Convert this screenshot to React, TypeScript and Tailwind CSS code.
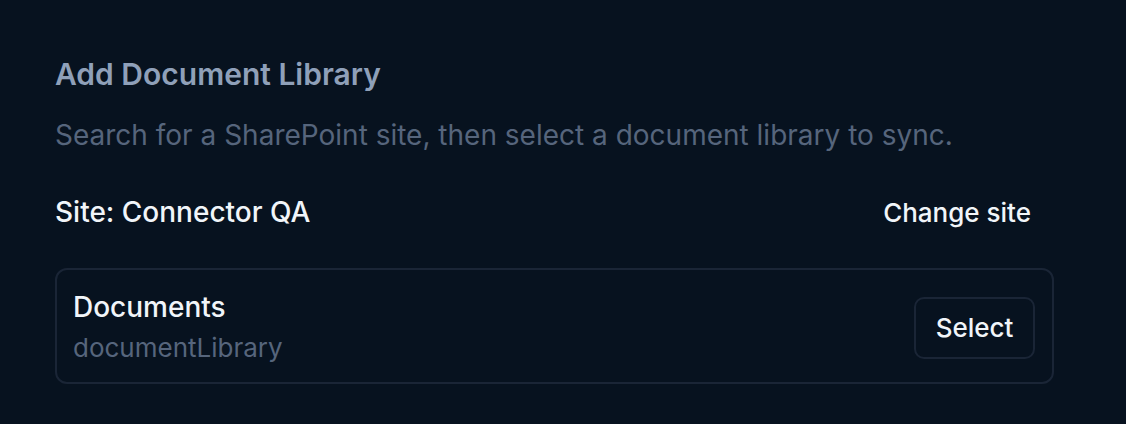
export default function App() {
  return (
    <div
      className="min-h-screen w-full bg-[#07121f] text-white"
      style={{ fontFamily: "Inter, 'Noto Sans', sans-serif" }}
    >
      <div className="pl-[55px] pr-[72px] pt-[54px]">
        <h2 className="text-[30px] leading-[40px] font-semibold text-[#8fa0b9]">
          Add Document Library
        </h2>
        <p className="mt-[21px] text-[28px] leading-[40px] text-[#56657c]">
          Search for a SharePoint site, then select a document library to sync.
        </p>

        <div className="mt-[35px] flex h-[44px] items-center justify-between">
          <span className="text-[28px] leading-[36px] font-medium text-[#f1f5f9]">
            Site: Connector QA
          </span>
          <button className="h-[44px] px-[23px] rounded-lg text-[26px] font-medium text-[#f1f5f9]">
            Change site
          </button>
        </div>

        <div className="mt-[34px] flex items-center justify-between rounded-[12px] border-2 border-[#1a2536] pl-[16px] pr-[17px] pt-[19px] pb-[16px]">
          <div className="flex flex-col gap-[5px]">
            <span className="text-[28px] leading-[36px] font-medium text-[#f1f5f9]">
              Documents
            </span>
            <span className="text-[26px] leading-[36px] text-[#56657c]">
              documentLibrary
            </span>
          </div>
          <button className="h-[62px] w-[121px] rounded-[10px] border-2 border-[#1a2536] text-[26px] font-medium text-[#f1f5f9]">
            Select
          </button>
        </div>
      </div>
    </div>
  );
}
